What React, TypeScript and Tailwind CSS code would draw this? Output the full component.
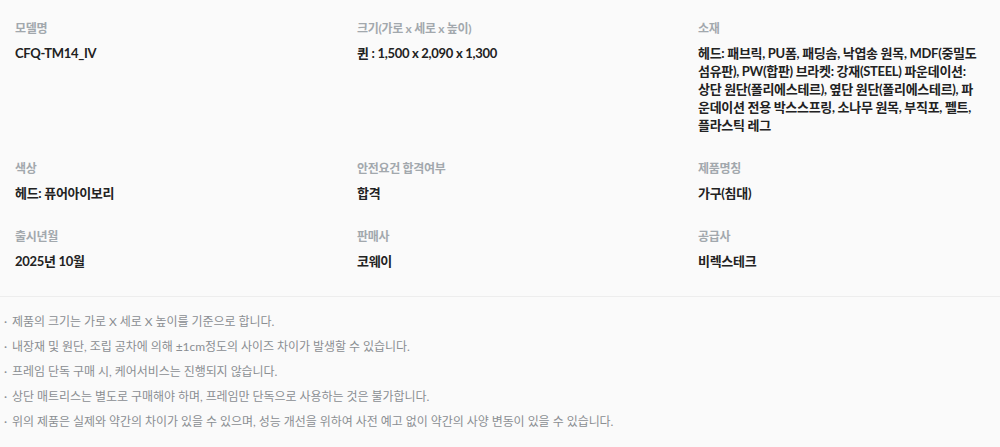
import React from "react";

const font = "font-['Lato','Noto_Sans_CJK_KR',sans-serif]";

type Item = { label: string; value: React.ReactNode };

const items: Item[] = [
  { label: "모델명", value: "CFQ-TM14_IV" },
  { label: "크기(가로 x 세로 x 높이)", value: "퀸 : 1,500 x 2,090 x 1,300" },
  {
    label: "소재",
    value: (
      <>
        헤드: 패브릭, PU폼, 패딩솜, 낙엽송 원목, MDF(중밀도 섬유판), PW(합판) 브라켓: 강재(STEEL) 파운데이션:{" "}
        <span className="whitespace-nowrap">상단</span> 원단(폴리에스테르), 옆단 원단(폴리에스테르), 파
        <span className="whitespace-nowrap">운데이션</span> 전용 박스스프링, 소나무 원목, 부직포, 펠트,{" "}
        <span className="whitespace-nowrap">플라스틱</span> 레그
      </>
    ),
  },
  { label: "색상", value: "헤드: 퓨어아이보리" },
  { label: "안전요건 합격여부", value: "합격" },
  { label: "제품명칭", value: "가구(침대)" },
  { label: "출시년월", value: "2025년 10월" },
  { label: "판매사", value: "코웨이" },
  { label: "공급사", value: "비렉스테크" },
];

const notes = [
  "제품의 크기는 가로 X 세로 X 높이를 기준으로 합니다.",
  "내장재 및 원단, 조립 공차에 의해 ±1cm정도의 사이즈 차이가 발생할 수 있습니다.",
  "프레임 단독 구매 시, 케어서비스는 진행되지 않습니다.",
  "상단 매트리스는 별도로 구매해야 하며, 프레임만 단독으로 사용하는 것은 불가합니다.",
  "위의 제품은 실제와 약간의 차이가 있을 수 있으며, 성능 개선을 위하여 사전 예고 없이 약간의 사양 변동이 있을 수 있습니다.",
];

export default function App() {
  return (
    <div className={`${font} w-[1000px] h-[447px] bg-[#fafafa] overflow-hidden`}>
      <div className="grid grid-cols-[288px_287px_291px] gap-x-[54px] gap-y-[26px] px-[15px] pt-[20px] pb-[26px] border-b border-[#ededed]">
        {items.map((it) => (
          <div key={it.label} className="flex flex-col gap-[6px]">
            <div className="text-[12px] leading-[18px] font-bold text-[#a2a8ad] tracking-[-0.3px]">
              {it.label}
            </div>
            <div className="text-[13px] leading-[18px] font-bold text-[#222222] tracking-[-0.3px]">
              {it.value}
            </div>
          </div>
        ))}
      </div>
      <ul className="pt-[12px] pl-[4px]">
        {notes.map((n) => (
          <li
            key={n}
            className="flex text-[12px] leading-[25px] text-[#8a8e92] tracking-[-0.05px]"
          >
            <span className="w-[8px] shrink-0">·</span>
            <span>{n}</span>
          </li>
        ))}
      </ul>
    </div>
  );
}
